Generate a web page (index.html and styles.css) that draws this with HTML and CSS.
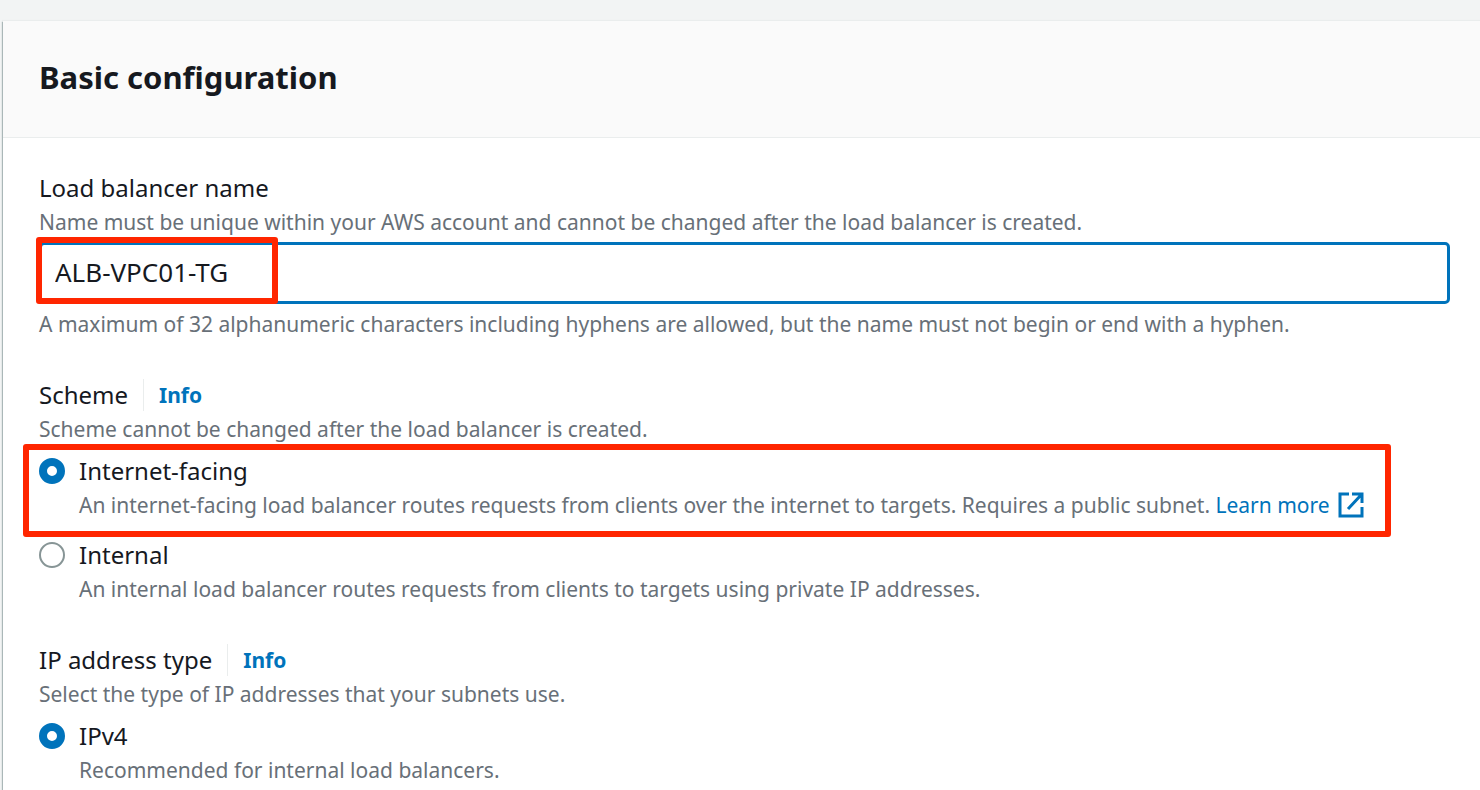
FILE: index.html
```
<!DOCTYPE html>
<html lang="en">
<head>
  <meta charset="UTF-8" />
  <meta name="viewport" content="width=device-width, initial-scale=1.0" />
  <title>Create Application Load Balancer</title>
  <link rel="stylesheet" href="styles.css">
</head>
<body>
  <main class="card">
    <header class="card-header">
      <h2>Basic configuration</h2>
    </header>

    <form class="card-body">
      <div class="field">
        <label class="label" for="lb-name">Load balancer name</label>
        <p class="hint" id="name-hint">Name must be unique within your AWS account and cannot be changed after the load balancer is created.</p>
        <div class="input-wrap">
          <input class="text-input" type="text" id="lb-name" value="ALB-VPC01-TG" aria-describedby="name-hint">
          <span class="mark mark-name"></span>
        </div>
        <p class="hint">A maximum of 32 alphanumeric characters including hyphens are allowed, but the name must not begin or end with a hyphen.</p>
      </div>

      <fieldset class="field">
        <legend class="label">Scheme <a class="info" href="#scheme">Info</a></legend>
        <p class="hint">Scheme cannot be changed after the load balancer is created.</p>
        <div class="options">
          <div class="option">
            <input type="radio" name="scheme" id="internet-facing" checked>
            <div>
              <label class="label" for="internet-facing">Internet-facing</label>
              <p class="hint">An internet-facing load balancer routes requests from clients over the internet to targets. Requires a public subnet.
                <a class="link" href="#learn-more">Learn more<svg class="external" viewBox="0 0 26 26" aria-hidden="true"><path d="M11 2H2v22h22V15M14 2h10v9M23 3L10 17" /></svg></a></p>
            </div>
            <span class="mark mark-option"></span>
          </div>
          <div class="option">
            <input type="radio" name="scheme" id="internal">
            <div>
              <label class="label" for="internal">Internal</label>
              <p class="hint">An internal load balancer routes requests from clients to targets using private IP addresses.</p>
            </div>
          </div>
        </div>
      </fieldset>

      <fieldset class="field">
        <legend class="label">IP address type <a class="info" href="#ip-type">Info</a></legend>
        <p class="hint">Select the type of IP addresses that your subnets use.</p>
        <div class="options">
          <div class="option">
            <input type="radio" name="ip-type" id="ipv4" checked>
            <div>
              <label class="label" for="ipv4">IPv4</label>
              <p class="hint">Recommended for internal load balancers.</p>
            </div>
          </div>
        </div>
      </fieldset>
    </form>
  </main>
</body>
</html>
```

FILE: styles.css
```
* {
  box-sizing: border-box;
}
body {
  margin: 0;
  padding: 21px 0 0 3px;
  background: #f2f4f4;
  color: #16191f;
  font-family: "Noto Sans", "Open Sans", sans-serif;
}
.card {
  min-height: calc(100vh - 21px);
  background: #fff;
  box-shadow: -1px 1px 1px #aab7b8, 0 0 1px 1px #eaeded;
}
.card-header {
  padding: 34px 36px 38px;
  background: #fafafa;
  border-bottom: 1px solid #eaeded;
}
.card-header h2 {
  margin: 0;
  font-size: 31px;
  line-height: 44px;
}
.card-body {
  padding: 32px 30px 0 36px;
}
.field {
  margin: 0 0 35px;
  padding: 0;
  border: none;
}
.field:last-child {
  margin-bottom: 0;
}
.label {
  display: block;
  padding: 0;
  font-size: 24px;
  line-height: 36px;
}
.hint {
  margin: 0;
  padding-bottom: 2px;
  color: #687078;
  font-size: 21px;
  line-height: 32px;
}
.input-wrap {
  position: relative;
  margin: 2px 0 4px;
}
.text-input {
  display: block;
  width: 100%;
  height: 62px;
  padding: 0 13px 2px;
  border: 3px solid #0073bb;
  border-radius: 5px;
  background: #fff;
  color: #16191f;
  font: inherit;
  font-size: 26px;
  outline: none;
}
legend.label {
  display: flex;
  align-items: center;
}
.info {
  margin-left: 15px;
  padding-left: 15px;
  border-left: 1px solid #eaeded;
  color: #0073bb;
  font-size: 21px;
  font-weight: bold;
  line-height: 32px;
  text-decoration: none;
}
.link {
  color: #0073bb;
  text-decoration: none;
}
.external {
  width: 26px;
  height: 26px;
  margin-left: 8px;
  vertical-align: -5px;
  fill: none;
  stroke: #0073bb;
  stroke-width: 3;
}
.options {
  display: flex;
  flex-direction: column;
  align-items: flex-start;
  gap: 14px;
  margin-top: 6px;
}
.option {
  position: relative;
  display: flex;
  gap: 14px;
}
.option input {
  flex: none;
  appearance: none;
  width: 26px;
  height: 26px;
  margin: 5px 0 0;
  border: 2px solid #879596;
  border-radius: 50%;
  background: #fff;
}
.option input:checked {
  border: 8px solid #0073bb;
}
/* red outlines over the values to fill in */
.mark {
  position: absolute;
  border: 6px solid #ff2600;
  border-radius: 3px;
  pointer-events: none;
}
.mark-name {
  top: -5px;
  left: -3px;
  width: 242px;
  bottom: 0;
}
.mark-option {
  top: -9px;
  right: -27px;
  bottom: -14px;
  left: -16px;
}
```
